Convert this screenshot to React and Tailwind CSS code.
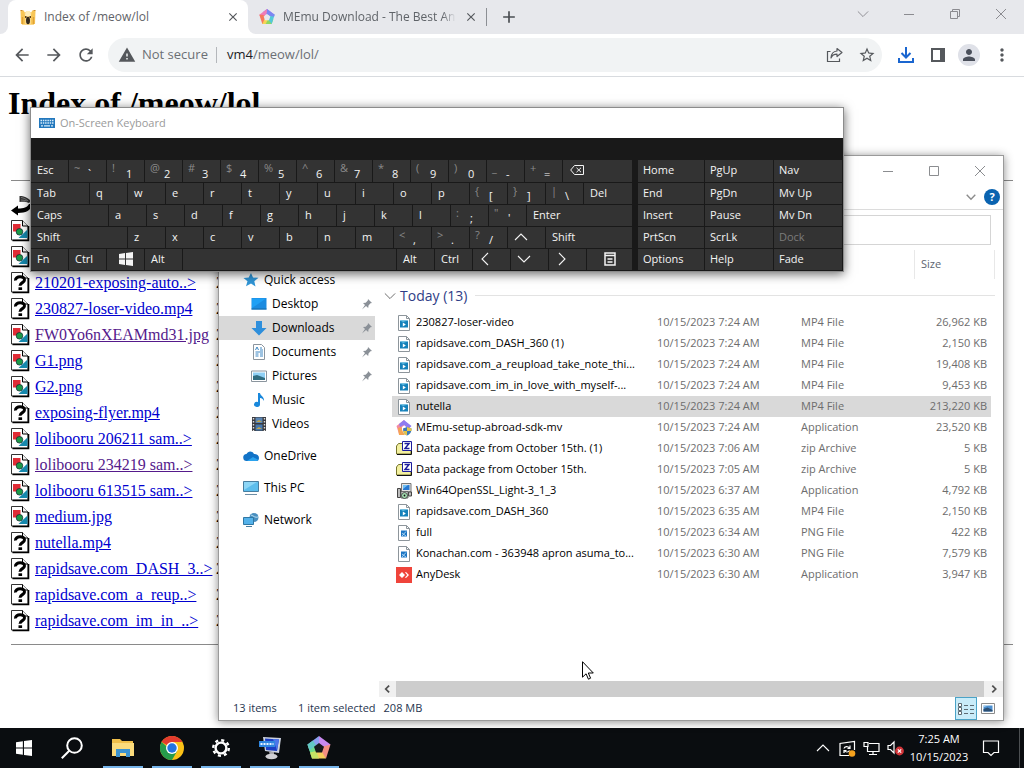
import React from "react";
import {
  MdArrowBack,
  MdArrowForward,
  MdRefresh,
  MdWarning,
  MdStarBorder,
  MdMoreVert,
  MdPerson,
  MdClose,
  MdAdd,
} from "react-icons/md";

const UI = "font-['Open_Sans','Noto_Sans',sans-serif]";

/* ---------- shared drawings ---------- */

function Chevron({ dir = "down", className = "" }) {
  const d = { down: "M1 4l6 6 6-6", up: "M1 10l6-6 6 6", left: "M9 1L3 7l6 6", right: "M4 1l6 6-6 6" }[dir];
  return (
    <svg viewBox="0 0 14 14" className={className} fill="none" stroke="currentColor" strokeWidth="1.1">
      <path d={d} />
    </svg>
  );
}

function CaptionIcon({ kind }) {
  return (
    <svg viewBox="0 0 12 12" className="h-3 w-3" fill="none" stroke="currentColor" strokeWidth="1">
      {kind === "min" && <path d="M1 6.500h10" />}
      {kind === "max" && <path d="M1.500 1.500h9v9h-9z" />}
      {kind === "restore" && <path d="M1.500 3.500h7v7h-7zM3.500 3.500v-2h7v7h-2" />}
      {kind === "close" && <path d="M1 1l10 10M11 1L1 11" />}
    </svg>
  );
}

function PentagonLogo({ className }) {
  return (
    <svg viewBox="0 0 24 24" className={className}>
      <path d="M12 0L5.500 4.800l6 4 4.500 1z" fill="#8f8df0" />
      <path d="M12 0l11.500 8.500-3 1.500-7.500-2.500z" fill="#b57cf0" />
      <path d="M12 0L.500 8.500l2.500 5 6-3.500 2.500-4z" fill="#f07cb8" />
      <path d="M.500 8.500L5 22.500h5l-1-12-4-2z" fill="#f6785c" />
      <path d="M5 22.500h12l-2-6-6-3z" fill="#f5d455" />
      <path d="M10 22.500h9l2.500-7-6-1-2.500 2z" fill="#8fd860" />
      <path d="M23.500 8.500L19 22.500l-5-6.500 1-7 5-1.500z" fill="#54c9d8" />
      <path d="M12 0l11.500 8.500-1 3-7-1.500-3.500-2z" fill="#7b86f2" />
      <path d="M12 7.500l5 3.700-2 5.800H9l-2-5.800z" fill="currentColor" />
    </svg>
  );
}

function TaskPentagon() {
  return (
    <svg viewBox="0 0 24 24" className="h-6 w-6">
      <path d="M12 0L.500 8.500l2 6L12 12z" fill="#8ba0f0" />
      <path d="M.500 8.500L5 22.500l5-4L8 8z" fill="#6fdc8a" />
      <path d="M.500 8.500L6 4.500l3 5-6.500 5z" fill="#62c8c4" />
      <path d="M12 0l11.500 8.500-5 4L12 8z" fill="#c98af0" />
      <path d="M23.500 8.500L19 22.500l-5-5 2-7z" fill="#f48f82" />
      <path d="M5 22.500h14l-4-6.500-5-1z" fill="#f7cf5c" />
      <path d="M5 22.500l-2-6 6-1.500 3 7.500z" fill="#c5e465" />
      <path d="M12 7l5 3.700-2 5.800H9l-2-5.800z" fill="#15191c" />
    </svg>
  );
}

function CatFavicon() {
  return (
    <svg viewBox="0 0 18 18" className="h-[18px] w-[18px] shrink-0">
      <path d="M5 4h8l2 13H3z" fill="#fbd98a" />
      <path d="M1.500 2.500h3.500l1 5v8.500H2z" fill="#f8c656" />
      <path d="M16.500 2.500H13l-1 5v8.500h4z" fill="#f8c656" />
      <path d="M7 3h4l1 5H6z" fill="#ffeebb" />
      <ellipse cx="9" cy="12.500" rx="2" ry="3.800" fill="#33291d" />
      <path d="M6 8h1.500v2H6zM10.500 8H12v2h-1.500z" fill="#5a431f" />
      <path d="M3.500 9v7M14.500 9v7" stroke="#e0a238" strokeWidth="1.500" />
      <path d="M1.500 2.500h2M14.500 2.500h2" stroke="#c98a2c" />
    </svg>
  );
}

/* ---------- browser ---------- */

function Browser() {
  return (
    <div className="flex flex-1 flex-col bg-white">
      <div className="flex h-[34px] items-stretch bg-[#e7e8ec] text-[#5f6368]">
        <div className="w-2 bg-white">
          <div className="h-full rounded-br-lg bg-[#e7e8ec]" />
        </div>
        <div className="flex w-60 items-center rounded-t-lg bg-white pl-[11px] pr-2">
          <CatFavicon />
          <span className="ml-[7px] flex-1 truncate text-[12px]">Index of /meow/lol</span>
          <button aria-label="Close tab" className="text-[#55585c]"><MdClose size={14} /></button>
        </div>
        <div className="w-2 bg-white">
          <div className="h-full rounded-bl-lg bg-[#e7e8ec]" />
        </div>
        <div className="flex w-[230px] items-center pl-[3px]">
          <PentagonLogo className="h-4 w-4 shrink-0 text-[#e7e8ec]" />
          <span className="ml-2 w-[173px] overflow-hidden whitespace-nowrap text-[12px] [mask-image:linear-gradient(to_right,black_92%,transparent)]">
            MEmu Download - The Best And
          </span>
          <button aria-label="Close tab" className="ml-2 text-[#55585c]"><MdClose size={14} /></button>
        </div>
        <div className="my-2 w-px bg-[#8c8f94]" />
        <button aria-label="New tab" className="ml-3 text-[#4a4d51]"><MdAdd size={20} /></button>
        <div className="ml-auto flex h-7 items-center text-[#8b8b90]">
          <button aria-label="Search tabs" className="flex w-[46px] justify-center"><Chevron className="h-3 w-3" /></button>
          <button aria-label="Minimize" className="flex w-[46px] justify-center"><CaptionIcon kind="min" /></button>
          <button aria-label="Restore" className="flex w-[46px] justify-center"><CaptionIcon kind="restore" /></button>
          <button aria-label="Close" className="flex w-[46px] justify-center"><CaptionIcon kind="close" /></button>
        </div>
      </div>

      <div className="flex h-[43px] items-center border-b border-[#d8dbdf] pl-3 pr-3 text-[#55585c]">
        <button aria-label="Back"><MdArrowBack size={20} /></button>
        <button aria-label="Forward" className="ml-3"><MdArrowForward size={20} /></button>
        <button aria-label="Reload" className="ml-3"><MdRefresh size={20} /></button>
        <div className="ml-3 flex h-[34px] flex-1 items-center rounded-full bg-[#f1f3f4] pl-2.5 pr-1.5 text-[13px]">
          <MdWarning size={18} />
          <span className="ml-1.5 text-[#6b6f74]">Not secure</span>
          <span className="ml-2 mr-2.5 h-4 w-px bg-[#b4b7bb]" />
          <label htmlFor="address" className="text-[#202124]">vm4</label>
          <input id="address" defaultValue="/meow/lol/" className="min-w-0 flex-1 bg-transparent text-[#6b6f74] outline-none" />
          <button aria-label="Share">
            <svg viewBox="0 0 18 18" className="h-[18px] w-[18px]" fill="none" stroke="currentColor" strokeWidth="1.200">
              <path d="M4.500 5.500h-3v10h12v-3" />
              <path d="M11 2.500l5 4-5 4V8.200C8 8.200 6 9.500 5 12c.2-4 2.500-6.700 6-7z" strokeLinejoin="round" />
            </svg>
          </button>
          <button aria-label="Bookmark" className="ml-3.5"><MdStarBorder size={18} /></button>
        </div>
        <button aria-label="Downloads" className="ml-[15px] text-[#1a66d0]">
          <svg viewBox="0 0 18 18" className="h-[18px] w-[18px]" fill="none" stroke="currentColor" strokeWidth="2">
            <path d="M9 1v10M4.500 7L9 11.500 13.500 7M2 12v4h14v-4" />
          </svg>
        </button>
        <button aria-label="Side panel" className="ml-[15px]">
          <svg viewBox="0 0 16 16" className="h-4 w-4" fill="currentColor">
            <path d="M1 1h14v14H1zM3 3v10h7V3z" fillRule="evenodd" />
          </svg>
        </button>
        <button aria-label="Profile" className="ml-3 flex h-[22px] w-[22px] items-center justify-center rounded-full bg-[#dfe1e8] text-[#4a4f5a]">
          <MdPerson size={18} />
        </button>
        <button aria-label="Menu" className="ml-3"><MdMoreVert size={20} /></button>
      </div>

      <DirectoryListing />
    </div>
  );
}

const LISTING = [
  ["image", ""],
  ["image", ""],
  ["unknown", "210201-exposing-auto..>"],
  ["unknown", "230827-loser-video.mp4"],
  ["image", "FW0Yo6nXEAMmd31.jpg", true],
  ["image", "G1.png"],
  ["image", "G2.png"],
  ["unknown", "exposing-flyer.mp4"],
  ["image", "lolibooru 206211 sam..>"],
  ["image", "lolibooru 234219 sam..>", true],
  ["image", "lolibooru 613515 sam..>"],
  ["image", "medium.jpg"],
  ["unknown", "nutella.mp4"],
  ["unknown", "rapidsave.com_DASH_3..>"],
  ["unknown", "rapidsave.com_a_reup..>"],
  ["unknown", "rapidsave.com_im_in_..>"],
];

function ListingIcon({ kind }) {
  if (kind === "back") {
    return (
      <svg viewBox="0 0 20 22" className="h-[22px] w-5">
        <path d="M0 16.500l7-5v3c6 0 9-1 11-4.500l2 0c1 5-3 9-13 9v2.500z" fill="#000" />
        <path d="M8.500 2c5 0 8 1.500 11.500 5l-2 2c-3-1.500-6-1.500-9.500-1z" fill="#333" />
        <path d="M10 3.500c3 .5 5 1.500 7 3.500M10 6c2 0 4 .3 6 1" stroke="#999" strokeWidth=".7" fill="none" />
      </svg>
    );
  }
  return (
    <svg viewBox="0 0 20 22" className="h-[22px] w-5 shrink-0">
      <path d="M.5.5h11l5.500 5.500v14H.5z" fill="#fff" stroke="#333" />
      <path d="M17.500 6v14.500H1.500" fill="none" stroke="#000" strokeWidth="1.600" />
      <path d="M11.500.5V6H17" fill="#eee" stroke="#000" />
      {kind === "image" ? (
        <g>
          <path d="M2 4h7.500v7.500H2z" fill="#e02c35" />
          <path d="M16.500 9.500v8.500H7.500z" fill="#1689ae" />
          <circle cx="8.500" cy="11.800" r="3.300" fill="#1d9a48" stroke="#123" strokeWidth=".7" />
        </g>
      ) : (
        <g>
          <path d="M4.500 8.500C4 3.500 14 3.500 13.500 8c0 2.800-4.500 2.500-4.500 5.800" fill="none" stroke="#000" strokeWidth="3" />
          <path d="M7.500 15.300h3.600v2.700H7.500z" fill="#000" />
        </g>
      )}
    </svg>
  );
}

function DirectoryListing() {
  return (
    <main className="flex-1 px-2 pt-2 font-['Liberation_Serif',serif] text-black">
      <h1 className="text-[32px] font-bold leading-9">Index of /meow/lol</h1>
      <div className="mx-[3px] mt-[59px] border-t border-[#8a8a8a]" />
      <div className="mx-[3px] mt-[11px] flex h-[26px] items-center"><ListingIcon kind="back" /></div>
      <ul>
        {LISTING.map(([kind, name, visited], i) => (
          <li key={i} className="mx-[3px] flex h-[26px] items-center text-[16px]">
            <ListingIcon kind={kind} />
            {name && (
              <div className="ml-1 flex w-[181px] items-center">
                <a href="#" className={visited ? "whitespace-nowrap text-[#551a8b] underline" : "whitespace-nowrap text-[#0000d0] underline"}>{name}</a>
              </div>
            )}
            {name && <span>2</span>}
          </li>
        ))}
      </ul>
      <div className="mx-[3px] mt-[10px] border-t border-[#8a8a8a]" />
    </main>
  );
}

/* ---------- file explorer ---------- */

function NavIcon({ kind }) {
  return (
    <svg viewBox="0 0 16 16" className="h-4 w-4 shrink-0">
      {kind === "quick" && <path d="M8 1l2 4.500 5.500.3-4.200 3.400 1.200 5.300L8 11.500l-5 2.800 1.500-5L.5 6l5.200-.4z" fill="#2f95d6" />}
      {kind === "desktop" && <g><path d="M.5 2h15v11.500H.5z" fill="#1b8be0" /><path d="M1 2.500h14L1 12z" fill="#1fa0f5" /><path d="M.5 12.500h15v1H.5z" fill="#1568a8" /></g>}
      {kind === "downloads" && <path d="M5 1h6v7h4.500L8 15.500.5 8H5z" fill="#2e8fdc" />}
      {kind === "documents" && <g><path d="M2.500.5h8l3 3v12h-11z" fill="#fff" stroke="#8b959e" /><path d="M4.500 6l1.500-3 1.500 3M9 4h2M9 6h3M4.500 8h7.500M4.500 10h3M9 10h3M4.500 12h3M9 12h3" fill="none" stroke="#3c87c4" /></g>}
      {kind === "pictures" && <g><path d="M.5 3h15v10.500H.5z" fill="#fff" stroke="#8b959e" /><path d="M2 4.500h12v7.500H2z" fill="#8fd0f5" /><path d="M2 8l4-1 8 3v2H2z" fill="#2f6c80" /></g>}
      {kind === "music" && <path d="M7 1h2c.3 3 4.500 3.500 4 8-.5-1.500-2-3-4-3v6.500a3 2.500 0 1 1-2-2.400z" fill="#1988dc" />}
      {kind === "videos" && <g><path d="M1 1h14v14H1z" fill="#3a3a3e" /><path d="M4.500 1.500h7v5.500h-7z" fill="#5b86b5" /><path d="M4.500 8.500h7v6h-7z" fill="#4778ae" /><path d="M5 6l3-2 3 2zM5 13l3-2 3 2z" fill="#c4a647" /><path d="M2.500 2v13M13.500 2v13" stroke="#ddd" strokeWidth="1.400" strokeDasharray="1.500 1.500" /></g>}
      {kind === "onedrive" && <g><path d="M4 13a3.500 3.500 0 0 1-.5-7C5 3 9 2.500 11 6c3 0 5 1.500 5 4s-1.500 3-3 3z" fill="#1273c7" /><path d="M4 13l6-4 5.500 3-2 1z" fill="#2ba3ee" /></g>}
      {kind === "pc" && <g><path d="M.5 1.500h15v10H.5z" fill="#5cbdec" stroke="#477d9f" /><path d="M1 2h13L1 10z" fill="#8dd6f6" /><path d="M2 14.500h12" stroke="#6c8da5" /></g>}
      {kind === "network" && <g><circle cx="11" cy="5.500" r="4.500" fill="#4a8fbf" /><path d="M8 3c3 1 4 3 7 2" stroke="#b8dff2" fill="none" /><path d="M.5 5.500h10v7H.5z" fill="#54b2ea" stroke="#2f77a4" /><path d="M3 14.500h6" stroke="#477d9f" /></g>}
    </svg>
  );
}

function Pin() {
  return (
    <svg viewBox="0 0 12 12" className="ml-auto mr-0.5 h-3 w-3 text-[#8a9097]">
      <path d="M7 1l4 4-1.500.3L7.500 7.500 7.200 10 5 8 1 11.500 4 7 2 5l2.700-.3L6.800 2.500z" fill="currentColor" />
    </svg>
  );
}

const NAV = [
  { items: [["quick", "Quick access", 0], ["desktop", "Desktop", 2], ["downloads", "Downloads", 3], ["documents", "Documents", 2], ["pictures", "Pictures", 2], ["music", "Music", 1], ["videos", "Videos", 1]] },
  { items: [["onedrive", "OneDrive", 0]] },
  { items: [["pc", "This PC", 0]] },
  { items: [["network", "Network", 0]] },
];

const FILES = [
  ["video", "230827-loser-video", "10/15/2023 7:24 AM", "MP4 File", "26,962 KB"],
  ["video", "rapidsave.com_DASH_360 (1)", "10/15/2023 7:24 AM", "MP4 File", "2,150 KB"],
  ["video", "rapidsave.com_a_reupload_take_note_thi...", "10/15/2023 7:24 AM", "MP4 File", "19,408 KB"],
  ["video", "rapidsave.com_im_in_love_with_myself-...", "10/15/2023 7:24 AM", "MP4 File", "9,453 KB"],
  ["video", "nutella", "10/15/2023 7:24 AM", "MP4 File", "213,220 KB"],
  ["memu", "MEmu-setup-abroad-sdk-mv", "10/15/2023 7:24 AM", "Application", "23,520 KB"],
  ["zip", "Data package from October 15th. (1)", "10/15/2023 7:06 AM", "zip Archive", "5 KB"],
  ["zip", "Data package from October 15th.", "10/15/2023 7:05 AM", "zip Archive", "5 KB"],
  ["setup", "Win64OpenSSL_Light-3_1_3", "10/15/2023 6:37 AM", "Application", "4,792 KB"],
  ["video", "rapidsave.com_DASH_360", "10/15/2023 6:35 AM", "MP4 File", "2,150 KB"],
  ["png", "full", "10/15/2023 6:34 AM", "PNG File", "422 KB"],
  ["png", "Konachan.com - 363948 apron asuma_to...", "10/15/2023 6:30 AM", "PNG File", "7,579 KB"],
  ["anydesk", "AnyDesk", "10/15/2023 6:30 AM", "Application", "3,947 KB"],
];

function FileIcon({ kind }) {
  if (kind === "memu") {
    return (
      <svg viewBox="0 0 16 16" className="h-4 w-4 shrink-0">
        <path d="M8 0L.5 6 3 14l3-1V7l4-3z" fill="#f58aa0" />
        <path d="M8 0l7.500 6-3 3L8 5 4 7 3 4z" fill="#8f7cf0" />
        <path d="M2 8l3-1 2 5 2 3H3z" fill="#f5a552" />
        <path d="M7 8.500l4-1.500 4.500 1.500c0 3.500-1 5.500-4.500 7-3-1.500-4-3.500-4-7z" fill="#3c7ab8" />
        <path d="M11 7l4.500 1.500V11H11zM7.200 11H11v4.500C9 14.500 7.700 13 7.200 11z" fill="#e5c646" />
      </svg>
    );
  }
  if (kind === "zip") {
    return (
      <svg viewBox="0 0 16 16" className="h-4 w-4 shrink-0">
        <path d="M.5 13V5l2-2.500h4V5H15v8z" fill="#f3f0a0" stroke="#77752c" />
        <path d="M1 13.500h14.500V6" fill="none" stroke="#111" />
        <path d="M6.500.5h9v9h-9z" fill="#fff" stroke="#1c1c9c" />
        <path d="M8.500 2.500h4.500L9 7.500h4.500" fill="none" stroke="#1c1c9c" strokeWidth="1.500" />
      </svg>
    );
  }
  if (kind === "setup") {
    return (
      <svg viewBox="0 0 16 16" className="h-4 w-4 shrink-0">
        <path d="M5.500.5h9.500v8.500H5.500z" fill="#e4e4e4" stroke="#777" />
        <path d="M7 2h6.500v5H7z" fill="#2878d0" />
        <path d="M7 2h5L7 6z" fill="#6fc0f5" />
        <path d="M1.500 5.500h3v9h-3zM12.500 9h3v4h-3z" fill="#bdbdbd" stroke="#444" />
        <path d="M5 8.500h7v6.500H5z" fill="#d8d8d8" stroke="#555" strokeWidth=".8" />
        <circle cx="8.500" cy="12.500" r="3" fill="#a6dfb2" stroke="#333" strokeWidth=".8" />
        <circle cx="8.500" cy="12.500" r=".9" fill="#111" />
      </svg>
    );
  }
  if (kind === "anydesk") {
    return (
      <svg viewBox="0 0 16 16" className="h-4 w-4 shrink-0">
        <path d="M0 0h16v16H0z" fill="#ef443b" />
        <path d="M6 5l3 3-3 3-3-3zM9 5.500L10 5l3 3-3 3-1-.5L11.200 8z" fill="#fff" />
      </svg>
    );
  }
  return (
    <svg viewBox="0 0 16 16" className="h-4 w-4 shrink-0">
      <path d="M2.500.5h8l3 3v12h-11z" fill="#fff" stroke="#8d959b" />
      <path d="M10.500.5v3h3" fill="none" stroke="#8d959b" />
      {kind === "video" ? (
        <g><path d="M4 5.500h8v7H4z" fill="#1581ba" /><path d="M4 5.500h8L7 7z" fill="#5fbde3" /><path d="M6.800 7.500v4l3-2z" fill="#fff" /></g>
      ) : (
        <g><path d="M5 5.500h6v6H5z" fill="#1c76c4" /><path d="M6 11l4-4.500M6 8l4 3" stroke="#b7dcf6" strokeWidth=".9" /></g>
      )}
    </svg>
  );
}

function Explorer() {
  const pad = { 0: "pl-6", 1: "pl-8", 2: "pl-8", 3: "pl-8 bg-[#d9d9d9]" };
  return (
    <section aria-label="Downloads" className="absolute bottom-[47px] left-[218px] right-5 top-[155px] flex flex-col border border-[#9a9a9a] bg-white text-[11px] text-black shadow-[0_1px_9px_rgba(0,0,0,0.45)]">
      <header className="flex h-[29px] items-center justify-end text-[#8b8d90]">
        <button aria-label="Minimize" className="flex w-[46px] justify-center"><CaptionIcon kind="min" /></button>
        <button aria-label="Maximize" className="flex w-[46px] justify-center"><CaptionIcon kind="max" /></button>
        <button aria-label="Close" className="flex w-[46px] justify-center"><CaptionIcon kind="close" /></button>
      </header>
      <div className="flex h-[25px] items-center justify-end gap-2 border-b border-[#dcdcdc] pr-[3px]">
        <button aria-label="Expand ribbon" className="text-[#8c8c8c]"><Chevron className="h-2.5 w-2.5 stroke-2" /></button>
        <button aria-label="Help" className="flex h-4 w-4 items-center justify-center rounded-full bg-[#0a63b0] font-bold text-white">?</button>
      </div>
      <div className="flex h-10 items-start pl-3 pr-3 pt-[5px]">
        <input aria-label="Search Downloads" className="h-[30px] flex-1 border border-[#d5d5d5] bg-white px-2 outline-none" />
      </div>

      <div className="flex min-h-0 flex-1">
        <nav className="flex w-[156px] flex-col gap-2 pt-[18px]">
          {NAV.map((g, i) => (
            <ul key={i}>
              {g.items.map(([icon, label, level]) => (
                <li key={label}>
                  <a href="#" className={`flex h-6 items-center ${pad[level]}`}>
                    <NavIcon kind={icon} />
                    <span className="ml-[5px] text-[12px]">{label}</span>
                    {level >= 2 && <Pin />}
                  </a>
                </li>
              ))}
            </ul>
          ))}
        </nav>

        <div className="flex min-w-0 flex-1 flex-col pl-1">
          <div className="flex flex-1 flex-col pl-[5px] pr-2">
            <div className="flex h-[29px] justify-end text-[#5c6470]">
              <button className="flex w-[81px] items-center border-x border-[#e8e8e8] pl-1.5 text-[11px]">Size</button>
            </div>
            <h2 className="mt-[6px] flex h-[21px] items-center text-[14px] text-[#2f3d86]">
              <button className="flex items-center">
                <Chevron className="mr-1 h-3 w-3 text-[#666]" />
                Today (13)
              </button>
              <span className="ml-2 h-px flex-1 bg-[#e3e3e3]" />
            </h2>
            <div className="mt-[6px] pl-2 pr-1">
              <table className="w-full table-fixed border-collapse text-left">
                <colgroup>
                  <col />
                  <col className="w-36" />
                  <col className="w-[120px]" />
                  <col className="w-[77px]" />
                </colgroup>
                <tbody>
                  {FILES.map(([icon, name, date, type, size]) => (
                    <tr key={name} className={name === "nutella" ? "h-[21px] bg-[#d9d9d9]" : "h-[21px]"}>
                      <td className="p-0 pl-1">
                        <div className="flex items-center gap-1 whitespace-nowrap">
                          <FileIcon kind={icon} />
                          {name}
                        </div>
                      </td>
                      <td className="p-0 pl-[7px] text-[#6d6d6d]">{date}</td>
                      <td className="p-0 pl-[7px] text-[#6d6d6d]">{type}</td>
                      <td className="p-0 pr-1 text-right text-[#6d6d6d]">{size}</td>
                    </tr>
                  ))}
                </tbody>
              </table>
            </div>
          </div>
          <div className="flex h-4 items-center bg-[#f0f0f0] text-[#505050]">
            <button aria-label="Scroll left" className="flex w-[17px] justify-center"><Chevron dir="left" className="h-2 w-2 stroke-[3]" /></button>
            <div className="h-full flex-1 bg-[#cdcdcd]" />
            <button aria-label="Scroll right" className="flex w-[19px] justify-center"><Chevron dir="right" className="h-2 w-2 stroke-[3]" /></button>
          </div>
        </div>
      </div>

      <footer className="flex h-[23px] items-center pl-3.5 pr-2 text-[#27354f]">
        <span className="w-[65px]">13 items</span>
        <span>1 item selected</span>
        <span className="ml-2">208 MB</span>
        <button aria-label="Details view" className="ml-auto flex h-[23px] w-[22px] items-center justify-center border border-[#4ba3c7] bg-[#c9ecf9]">
          <svg viewBox="0 0 16 14" className="h-3.5 w-4" fill="none" stroke="#5d6b73">
            <path d="M.5 1.500h3v3h-3zM.5 5.500h3v3h-3zM.5 9.500h3v3h-3z" fill="#fff" />
            <path d="M6 3.500h4M12 3.500h4M6 7.500h4M12 7.500h4M6 11.500h4M12 11.500h4" />
          </svg>
        </button>
        <button aria-label="Thumbnail view" className="ml-1">
          <svg viewBox="0 0 14 11" className="h-[11px] w-3.5">
            <path d="M.5.5h13v10H.5z" fill="#fff" stroke="#8a8a8a" />
            <path d="M2.500 2.500h9v6h-9z" fill="#4b8fd0" />
            <path d="M2.500 6l4-1.500 5 2.500v1.500h-9z" fill="#2b4f73" />
            <path d="M2.500 4l5-1.500h-5z" fill="#bfe0f5" />
          </svg>
        </button>
      </footer>
    </section>
  );
}

/* ---------- on-screen keyboard ---------- */

const WIN = (
  <svg viewBox="0 0 14 14" className="ml-1.5 h-3.5 w-3.5" fill="currentColor">
    <path d="M0 2l6-1v5.600H0zM7 .9L14 0v6.600H7zM0 7.500h6V13l-6-1zM7 7.500h7V14l-7-.9z" />
  </svg>
);
const BACKSPACE = (
  <svg viewBox="0 0 14 12" className="ml-px h-3 w-3.5" fill="none" stroke="currentColor">
    <path d="M4.500 1.500h9v9h-9L.7 6zM6.500 3.800l4.500 4.400M11 3.800L6.500 8.200" />
  </svg>
);
const MENU = (
  <svg viewBox="0 0 12 14" className="ml-[11px] h-3.5 w-3" fill="none" stroke="currentColor">
    <path d="M1 1h10v12H1z" strokeWidth="1.500" />
    <path d="M1 3.500h10M3.500 7h5M3.500 10h5" strokeWidth="1.500" />
  </svg>
);

const K = "w-[38px]";
const keys = (s) => s.split(" ").map((t) => (t.length === 2 ? [K, t[1], t[0]] : [K, t]));

const ROWS = [
  [[K, "Esc"], ...keys("~` !1 @2 #3 $4 %5 ^6 &7 *8 (9 )0 _- +="), ["flex-1", BACKSPACE]],
  [["w-[59px]", "Tab"], ...keys("q w e r t y u i o p {[ }] |\\"), ["flex-1", "Del"]],
  [["w-[78px]", "Caps"], ...keys("a s d f g h j k l :; \"'"), ["flex-1", "Enter"]],
  [["w-[97px]", "Shift"], ...keys("z x c v b n m <, >. ?/"), [K, <Chevron dir="up" className="h-3.5 w-3.5" />], ["flex-1", "Shift"]],
  [
    [K, "Fn"], [K, "Ctrl"], [K, WIN], [K, "Alt"], ["flex-1", ""], [K, "Alt"], [K, "Ctrl"],
    [K, <Chevron dir="left" className="h-3.5 w-3.5" />],
    [K, <Chevron dir="down" className="h-3.5 w-3.5" />],
    [K, <Chevron dir="right" className="h-3.5 w-3.5" />],
    ["w-[46px]", MENU],
  ],
];

const SIDE = [
  ["Home", "PgUp", "Nav"],
  ["End", "PgDn", "Mv Up"],
  ["Insert", "Pause", "Mv Dn"],
  ["PrtScn", "ScrLk", "Dock"],
  ["Options", "Help", "Fade"],
];

function Keyboard() {
  return (
    <section aria-label="On-Screen Keyboard" className="absolute left-[30px] top-[107px] w-[814px] border border-[#8c8c8c] bg-[#191919] text-[11px] text-[#f4f4f4] shadow-[0_2px_10px_rgba(0,0,0,0.6)]">
      <header className="flex h-[30px] items-center gap-[5px] bg-white pl-2 text-[11px] text-[#9a9a9a]">
        <svg viewBox="0 0 16 10" className="h-2.5 w-4">
          <path d="M0 0h16v10H0z" fill="#2378bd" />
          <path d="M1.500 2.500h13M1.500 5h13" stroke="#d8ecfa" strokeWidth="1.300" strokeDasharray="1.500 .8" />
          <path d="M2 7.800h2M5 7.800h6M12 7.800h2" stroke="#d8ecfa" strokeWidth="1.300" />
        </svg>
        On-Screen Keyboard
      </header>
      <div className="flex gap-[5px] pt-[22px]">
        <div className="flex w-[602px] flex-col">
          {ROWS.map((row, r) => (
            <div key={r} className={r === 0 ? "flex h-[23px]" : "flex h-[22px]"}>
              {row.map(([w, main, shifted], i) => (
                <button key={i} className={`${w} flex border-b border-r border-[#191919] bg-[#333] text-left leading-4 ${shifted ? "items-stretch pl-[5px]" : "items-center pb-0.5 pl-1.5"}`}>
                  {shifted && <span className="w-3.5 self-start text-[#8a8a8a]">{shifted}</span>}
                  {shifted ? <span className="self-end">{main}</span> : main}
                </button>
              ))}
            </div>
          ))}
        </div>
        <div className="flex flex-1 flex-col">
          {SIDE.map((row, r) => (
            <div key={r} className={r === 0 ? "flex h-[23px]" : "flex h-[22px]"}>
              {row.map((label, i) => (
                <button
                  key={label}
                  disabled={label === "Dock"}
                  className={`${i === 0 ? "w-[67px]" : "flex-1"} border-b border-r border-[#191919] bg-[#333] pb-0.5 pl-[5px] text-left leading-4 disabled:text-[#7b7b7b]`}
                >
                  {label}
                </button>
              ))}
            </div>
          ))}
        </div>
      </div>
    </section>
  );
}

/* ---------- taskbar ---------- */

const TASKS = [
  ["File Explorer", (
    <svg viewBox="0 0 22 20" className="h-5 w-[22px]">
      <path d="M0 1h8l2 2h11v15H0z" fill="#f0bf4a" />
      <path d="M0 5h22v13H0z" fill="#fbdb7c" />
      <path d="M4 11h14v8h-4v-4H8v4H4z" fill="#3c93d0" />
    </svg>
  )],
  ["Chrome", (
    <svg viewBox="0 0 24 24" className="h-6 w-6">
      <circle cx="12" cy="12" r="12" fill="#fbc117" />
      <path d="M12 12L1.600 6A12 12 0 0 1 22.400 6H12z" fill="#e33b2e" />
      <path d="M1.600 6A12 12 0 0 0 12 24l5.200-9H12z" fill="#269b4b" />
      <circle cx="12" cy="12" r="6" fill="#fff" />
      <circle cx="12" cy="12" r="4.700" fill="#2374e1" />
    </svg>
  )],
  ["Settings", (
    <svg viewBox="0 0 20 20" className="h-5 w-5" fill="none" stroke="#fff">
      <circle cx="10" cy="10" r="5.400" strokeWidth="2.400" />
      <circle cx="10" cy="10" r="7.800" strokeWidth="2.400" strokeDasharray="3.060 3.060" />
    </svg>
  )],
  ["Remote screen", (
    <svg viewBox="0 0 24 24" className="h-6 w-6">
      <path d="M5 1l18 1-2 15L7 15z" fill="#cdd3e0" />
      <path d="M7 2.500l14 1-2 11.500-11-1z" fill="#1c3fc4" />
      <path d="M15 3l6 .5-2 11z" fill="#4b76ea" />
      <path d="M11 15.500l5 .5v4h-4z" fill="#a8a8ac" />
      <ellipse cx="13.500" cy="20.500" rx="6" ry="2.800" fill="#d0d0d4" />
      <path d="M1 5h16v6H1z" fill="#2f86e0" />
      <path d="M2.500 8h13" stroke="#e8f3ff" strokeWidth="2" strokeDasharray="2 1" />
    </svg>
  )],
  ["MEmu", <TaskPentagon />],
];

function Taskbar() {
  return (
    <footer className="flex h-10 items-stretch bg-[#0a0d10] text-white">
      <button aria-label="Start" className="flex w-12 items-center justify-center">
        <svg viewBox="0 0 14 14" className="h-4 w-4" fill="currentColor">
          <path d="M0 2l6-1v5.600H0zM7 .9L14 0v6.600H7zM0 7.500h6V13l-6-1zM7 7.500h7V14l-7-.9z" />
        </svg>
      </button>
      <button aria-label="Search" className="flex w-12 items-center justify-center">
        <svg viewBox="0 0 22 22" className="h-[22px] w-[22px]" fill="none" stroke="currentColor" strokeWidth="2">
          <circle cx="13.500" cy="8.500" r="7.300" />
          <path d="M8.500 13.500L.8 21.200" />
        </svg>
      </button>
      <div className="ml-0.5 flex">
        {TASKS.map(([label, icon]) => (
          <button key={label} aria-label={label} className="flex w-[49px] flex-col items-center">
            <span className="flex flex-1 items-center pt-0.5">{icon}</span>
            <span className="h-0.5 w-10 bg-[#76b4ea]" />
          </button>
        ))}
      </div>
      <div className="ml-auto flex items-center">
        <button aria-label="Show hidden icons" className="flex w-6 justify-center"><Chevron dir="up" className="h-3.5 w-3.5" /></button>
        <button aria-label="Updates" className="flex w-6 justify-center">
          <svg viewBox="0 0 17 17" className="h-[17px] w-[17px]" fill="none" stroke="currentColor" strokeWidth="1.200">
            <path d="M10 15.500H1v-12L15.500 1.500V10" />
            <path d="M5 8.500c.5-2.500 4-2.500 5.500-.5M11 5.500v3H8.500M10.500 10.500c-1 2-4 2-5 0M5 13v-2.500h2.500" />
            <circle cx="13" cy="13.500" r="3.300" fill="#f5a11d" stroke="none" />
          </svg>
        </button>
        <button aria-label="Network" className="flex w-6 justify-center">
          <svg viewBox="0 0 17 15" className="h-[15px] w-[17px]" fill="none" stroke="currentColor" strokeWidth="1.200">
            <path d="M6 2.500h10v8H4.500V6M1 1.500h4v4H1zM10 10.500v3M6 13.500h8" />
          </svg>
        </button>
        <button aria-label="Volume muted" className="flex w-6 justify-center">
          <svg viewBox="0 0 17 16" className="h-4 w-[17px]" fill="none" stroke="currentColor" strokeWidth="1.200">
            <path d="M1 5.500h2.500L7 2v11L3.500 9.500H1z" />
            <circle cx="12.500" cy="11" r="4.400" fill="#d13438" stroke="none" />
            <path d="M10.800 9.300l3.400 3.400M14.200 9.300l-3.400 3.400" />
          </svg>
        </button>
        <button className="w-[64px] text-center text-[11px] leading-[18px]">
          <div>7:25 AM</div>
          <div>10/15/2023</div>
        </button>
        <button aria-label="Notifications" className="flex w-10 justify-center">
          <svg viewBox="0 0 18 18" className="h-[18px] w-[18px]" fill="none" stroke="currentColor" strokeWidth="1.200">
            <path d="M1.500 2h15v11.500H12L9 16.500l-3-3H1.500z" />
          </svg>
        </button>
      </div>
      <div className="ml-2 mr-1 w-px bg-[#4c4f52]" />
    </footer>
  );
}

export default function App() {
  return (
    <div className={`relative flex h-screen flex-col overflow-hidden ${UI}`}>
      <Browser />
      <Explorer />
      <Keyboard />
      <svg viewBox="0 0 12 19" className="absolute left-[582px] top-[661px] h-[19px] w-3">
        <path d="M.5.700v15.500l3.600-3.400 2.300 5.400 2.200-1-2.300-5.200h5z" fill="#fff" stroke="#000" />
      </svg>
      <Taskbar />
    </div>
  );
}
